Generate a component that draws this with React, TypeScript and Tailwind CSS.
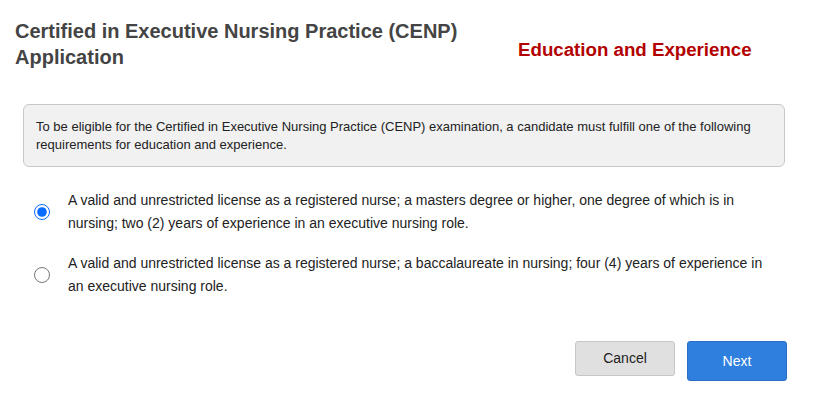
import { useState } from "react";

const options = [
  {
    id: "opt1",
    text: "A valid and unrestricted license as a registered nurse; a masters degree or higher, one degree of which is in nursing; two (2) years of experience in an executive nursing role.",
  },
  {
    id: "opt2",
    text: "A valid and unrestricted license as a registered nurse; a baccalaureate in nursing; four (4) years of experience in an executive nursing role.",
  },
];

export default function App() {
  const [selected, setSelected] = useState("opt1");

  return (
    <div className="w-[817px] h-[410px] bg-white font-['Liberation_Sans',Arial,sans-serif] text-[#333]">
      {/* Header */}
      <div className="flex items-start pt-[18px] pl-[15px]">
        <h1 className="w-[470px] text-[20px] leading-[26px] font-bold text-[#444]">
          Certified in Executive Nursing Practice (CENP) Application
        </h1>
        <h2 className="ml-[33px] mt-[21px] text-[18.7px] leading-[22px] font-bold text-[#b30000]">
          Education and Experience
        </h2>
      </div>

      {/* Info box */}
      <div className="mx-[23px] w-[762px] mt-[34px] rounded-[6px] border border-[#c8c8c8] bg-[#f1f1f1] px-[12px] pt-[13px] pb-[12px] text-[13px] leading-[18px] text-[#222]">
        To be eligible for the Certified in Executive Nursing Practice (CENP) examination, a candidate must fulfill one of the following requirements for education and experience.
      </div>

      {/* Options */}
      <div className="mt-[22px] flex flex-col gap-[18px] pl-[34px] pr-[40px]">
        {options.map((o) => (
          <label key={o.id} className="flex items-center cursor-pointer">
            <span className="w-[34px] shrink-0 flex items-center">
              <input
                type="radio"
                name="req"
                checked={selected === o.id}
                onChange={() => setSelected(o.id)}
                className="w-[16px] h-[16px] m-0 accent-[#0a6cff]"
              />
            </span>
            <span className="text-[14px] leading-[22.5px] text-[#222]">{o.text}</span>
          </label>
        ))}
      </div>

      {/* Buttons */}
      <div className="flex justify-end items-start gap-[12px] pr-[30px] mt-[44px]">
        <button className="w-[100px] h-[35px] rounded-[3px] border border-[#c6c6c6] bg-[#e0e0e0] text-[14px] text-[#222]">
          Cancel
        </button>
        <button className="w-[100px] h-[40px] rounded-[3px] border border-[#2a6fc4] bg-[#2f80de] text-[14px] text-white">
          Next
        </button>
      </div>
    </div>
  );
}
